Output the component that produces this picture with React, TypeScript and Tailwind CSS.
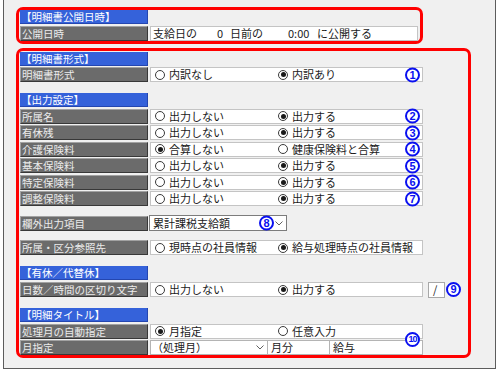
import React from 'react'

function Head({ children }: { children: React.ReactNode }) {
  return (
    <div className="h-[14px] w-[128px] shrink-0 border-r border-b border-[#2446b0] bg-[#3562da] pl-[1px] text-[10.5px] leading-[13px] whitespace-nowrap text-white">
      {children}
    </div>
  )
}

function Label({ children }: { children: React.ReactNode }) {
  return (
    <div className="h-[15px] w-[128px] shrink-0 overflow-hidden border border-t-[#a2a2a2] border-l-[#a2a2a2] border-r-[#383838] border-b-[#383838] bg-[#6b6b6b] pl-[1px] text-[10.5px] leading-[13px] whitespace-nowrap text-[#ececec]">
      {children}
    </div>
  )
}

function Num({ n, className = '' }: { n: number; className?: string }) {
  return (
    <span
      className={`flex h-[15px] w-[15px] items-center justify-center rounded-full border-[2px] border-[#0a10f0] bg-white font-['Liberation_Sans',sans-serif] font-bold leading-none text-[#0a10f0] ${n > 9 ? 'text-[9px] tracking-[-1px]' : 'text-[11px]'} ${className}`}
    >
      {n}
    </span>
  )
}

function Radio({ on, label, className = '' }: { on: boolean; label: string; className?: string }) {
  return (
    <div className={`flex items-center ${className}`}>
      <span className="flex h-[10px] w-[10px] shrink-0 items-center justify-center rounded-full border border-[#3a3a3a] bg-white">
        {on && <span className="h-[5px] w-[5px] rounded-full bg-[#1a1a1a]" />}
      </span>
      <span className="ml-[4px] whitespace-nowrap">{label}</span>
    </div>
  )
}

function RadioCell({ a, b, sel, num }: { a: string; b: string; sel: number; num?: number }) {
  return (
    <div className="relative ml-[2px] flex h-[15px] w-[273px] items-center border border-[#c4c4c4] bg-white text-[11px] text-[#1a1a1a]">
      <Radio on={sel === 0} label={a} className="w-[127px] pl-[4px]" />
      <Radio on={sel === 1} label={b} />
      {num && num < 10 && <Num n={num} className="absolute top-1/2 right-[2px] -translate-y-1/2" />}
      {num === 10 && <Num n={num} className="absolute top-[7px] right-[2px] z-10" />}
    </div>
  )
}

function Chevron() {
  return (
    <svg width="8" height="5" viewBox="0 0 8 5" className="shrink-0">
      <polyline points="0.5,0.5 4,4 7.5,0.5" fill="none" stroke="#606060" strokeWidth="1" />
    </svg>
  )
}

const outputRows: { label: string; a: string; b: string; sel: number; num: number }[] = [
  { label: '所属名', a: '出力しない', b: '出力する', sel: 1, num: 2 },
  { label: '有休残', a: '出力しない', b: '出力する', sel: 1, num: 3 },
  { label: '介護保険料', a: '合算しない', b: '健康保険料と合算', sel: 0, num: 4 },
  { label: '基本保険料', a: '出力しない', b: '出力する', sel: 1, num: 5 },
  { label: '特定保険料', a: '出力しない', b: '出力する', sel: 1, num: 6 },
  { label: '調整保険料', a: '出力しない', b: '出力する', sel: 1, num: 7 },
]

export default function App() {
  return (
    <div className="h-[371px] w-[500px] overflow-hidden bg-white font-['Noto_Sans_CJK_JP',sans-serif]">
      <div className="ml-[3px] h-[369px] w-[493px] border-r border-b border-l border-[#5c5c5c] bg-[#f0f0f0] pt-[7px] pl-[12px]">
        {/* 公開日時 */}
        <div className="w-[407px] rounded-[7px] border-[3px] border-[#ff0000] pl-[1px]">
          <Head>【明細書公開日時】</Head>
          <div className="mt-[2px] flex">
            <Label>公開日時</Label>
            <div className="ml-[2px] flex h-[15px] w-[268px] items-center border border-[#c4c4c4] bg-white pl-[2px] text-[11px] text-[#1a1a1a] whitespace-nowrap">
              <span className="w-[64px]">支給日の</span>
              <span className="w-[13px]">0</span>
              <span className="w-[58px]">日前の</span>
              <span className="w-[29px]">0:00</span>
              <span>に公開する</span>
            </div>
          </div>
        </div>

        {/* 明細書設定 */}
        <div className="mt-[4px] w-[455px] rounded-[7px] border-[3px] border-[#ff0000] pt-[1px] pl-[1px]">
          <Head>【明細書形式】</Head>
          <div className="mt-[1px] flex">
            <Label>明細書形式</Label>
            <RadioCell a="内訳なし" b="内訳あり" sel={1} num={1} />
          </div>

          <div className="mt-[11px]">
            <Head>【出力設定】</Head>
          </div>
          {outputRows.map((r) => (
            <div key={r.label} className="mt-[1.5px] flex">
              <Label>{r.label}</Label>
              <RadioCell a={r.a} b={r.b} sel={r.sel} num={r.num} />
            </div>
          ))}

          <div className="mt-[9px] flex h-[16px] items-center">
            <Label>欄外出力項目</Label>
            <div className="relative ml-[1px] flex h-[16px] w-[138px] items-center justify-between border border-[#7c7c7c] bg-white pr-[3px] pl-[3px] text-[11px] text-[#1a1a1a]">
              <span className="whitespace-nowrap">累計課税支給額</span>
              <Chevron />
              <Num n={8} className="absolute top-1/2 right-[12px] -translate-y-1/2" />
            </div>
          </div>

          <div className="mt-[9px] flex">
            <Label>所属・区分参照先</Label>
            <RadioCell a="現時点の社員情報" b="給与処理時点の社員情報" sel={1} />
          </div>

          <div className="mt-[11px]">
            <Head>【有休／代替休】</Head>
          </div>
          <div className="mt-[1.5px] flex items-center">
            <Label>日数／時間の区切り文字</Label>
            <RadioCell a="出力しない" b="出力する" sel={1} />
            <div className="ml-[5px] flex h-[16px] w-[17px] items-center border border-[#a8a8a8] bg-white pl-[4px] text-[11px] text-[#1a1a1a]">
              /
            </div>
            <Num n={9} className="ml-[1px]" />
          </div>

          <div className="mt-[10.5px]">
            <Head>【明細タイトル】</Head>
          </div>
          <div className="mt-[1.5px] flex">
            <Label>処理月の自動指定</Label>
            <RadioCell a="月指定" b="任意入力" sel={0} num={10} />
          </div>
          <div className="mt-[1.5px] flex">
            <Label>月指定</Label>
            <div className="ml-[2px] flex h-[15px] w-[273px] text-[11px] text-[#1a1a1a]">
              <div className="flex w-[118px] items-center justify-between border border-[#b4b4b4] bg-white pr-[3px] pl-[1px]">
                <span className="whitespace-nowrap">（処理月）</span>
                <Chevron />
              </div>
              <div className="flex w-[62px] items-center border-y border-r border-[#b4b4b4] bg-white pl-[3px]">月分</div>
              <div className="flex flex-1 items-center border-y border-r border-[#b4b4b4] bg-white pl-[3px]">給与</div>
            </div>
          </div>
        </div>
      </div>
    </div>
  )
}
